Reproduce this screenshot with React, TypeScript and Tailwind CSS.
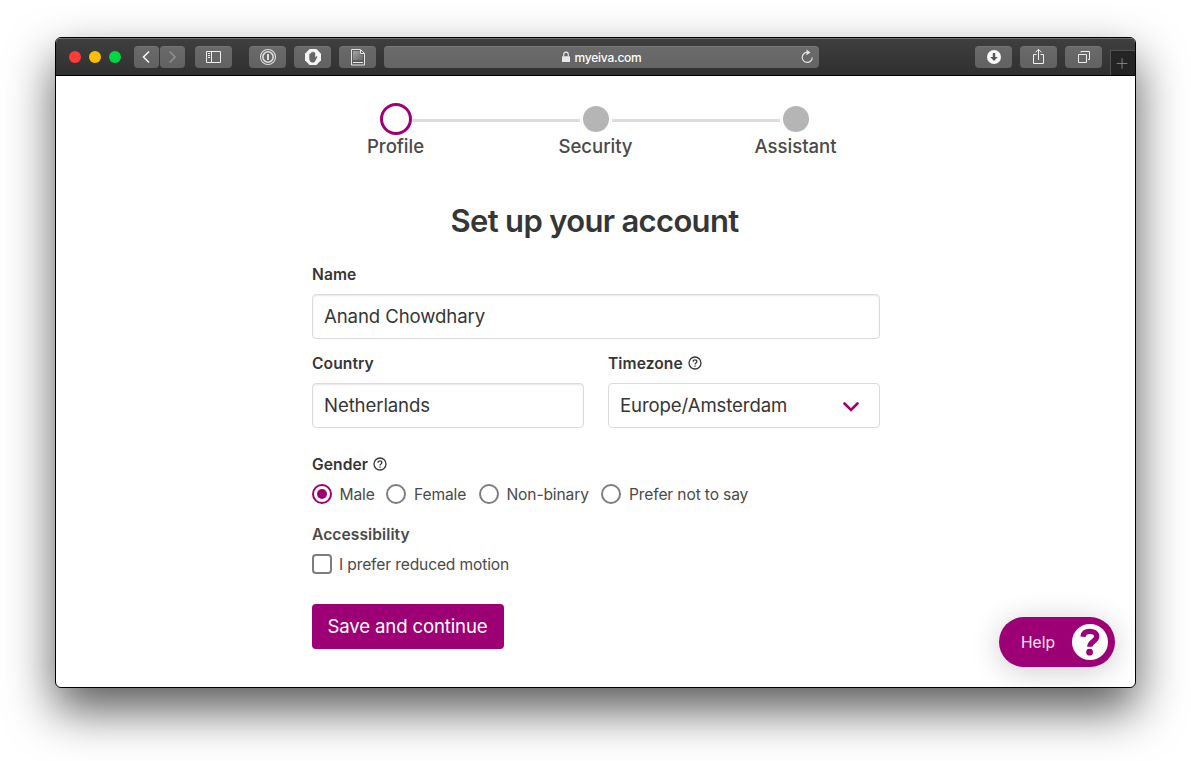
import type { ReactNode } from "react";

function ToolButton({ className = "", children }: { className?: string; children: ReactNode }) {
  return (
    <button
      className={`flex h-[22px] shrink-0 items-center justify-center rounded-[4px] border-t border-[#747474] bg-gradient-to-b from-[#6a6a6a] to-[#616161] ${className}`}
    >
      {children}
    </button>
  );
}

function Toolbar() {
  return (
    <div className="flex h-[38px] shrink-0 border-t border-b border-t-[#6c6c6c] border-b-black bg-gradient-to-b from-[#3f3f3f] to-[#303030] pl-[13px]">
      <div className="flex h-9 items-center gap-2">
        <span className="size-3 rounded-full bg-[#ff3b37]" />
        <span className="size-3 rounded-full bg-[#ffbf00]" />
        <span className="size-3 rounded-full bg-[#00d544]" />
      </div>
      <div className="ml-[13px] flex gap-px pt-[7px]">
        <ToolButton className="w-[25px]">
          <svg width="25" height="21" viewBox="0 0 25 21" fill="none" stroke="#f2f2f2" strokeWidth="1.6">
            <path d="M15 4.500 9.500 10 15 15.500" />
          </svg>
        </ToolButton>
        <ToolButton className="w-[25px]">
          <svg width="25" height="21" viewBox="0 0 25 21" fill="none" stroke="#929292" strokeWidth="1.4">
            <path d="M9.600 4.500 15.100 10 9.600 15.500" />
          </svg>
        </ToolButton>
      </div>
      <div className="ml-[10px] pt-[7px]">
        <ToolButton className="w-[37px]">
          <svg width="37" height="21" viewBox="0 0 37 21" fill="none" stroke="#ededed">
            <path d="M11.500 4.500h14v11h-14zM16.500 4.500v11M13 6.500h2M13 8.500h2M13 10.500h2" />
          </svg>
        </ToolButton>
      </div>
      <div className="ml-[17px] flex gap-2 pt-[7px]">
        <ToolButton className="w-[37px]">
          <svg width="37" height="21" viewBox="0 0 37 21" fill="none" stroke="#dedede">
            <circle cx="19" cy="10" r="7.500" strokeWidth="1.100" />
            <circle cx="19" cy="10" r="5.200" strokeWidth="1.600" />
            <path d="M19 7v6" strokeWidth="2" />
          </svg>
        </ToolButton>
        <ToolButton className="w-[37px]">
          <svg width="37" height="21" viewBox="0 0 37 21">
            <path d="M15.600 2h6.800L27 6.700v6.600L22.400 18h-6.800L11 13.300V6.700z" fill="#f4f4f4" />
            <path
              d="M15.300 10.800V7.200c0-.9 1.300-.9 1.400 0V6c0-1 1.400-1 1.500 0v-.7c0-1 1.500-1 1.500 0V6c.1-.9 1.500-.8 1.500.1v4.400l.8-1c.7-.7 1.600 0 1.200.7l-2 3.900c-.5 1-1.300 1.500-2.500 1.500-2.300 0-3.400-1.400-3.400-4.800z"
              fill="#656565"
            />
          </svg>
        </ToolButton>
        <ToolButton className="w-[37px]">
          <svg width="37" height="21" viewBox="0 0 37 21" fill="none" stroke="#e6e6e6">
            <defs>
              <linearGradient id="page" x1="0" y1="0" x2="1" y2="1">
                <stop offset="0" stopColor="#a6a6a6" />
                <stop offset="1" stopColor="#666" />
              </linearGradient>
            </defs>
            <path d="M12.500 2.500h9l4 4v11.500h-13z" fill="#5c5c5c" />
            <path d="M14 4h7v3.500h3V13H14z" fill="url(#page)" stroke="none" />
            <path d="M21.500 3v3.500h4" />
            <path d="M14 15.500h10" strokeWidth="1.200" />
          </svg>
        </ToolButton>
      </div>
      <div className="ml-2 pt-[7px]">
        <div className="flex h-[22px] w-[435px] items-center rounded-[4px] border-t border-[#7a7a7a] bg-gradient-to-b from-[#6b6b6b] to-[#646464] pr-[5px] pl-[177px]">
          <svg width="10" height="12" viewBox="0 0 10 12" className="mb-px shrink-0">
            <path d="M2.700 5.500V3.400a2.300 2.300 0 0 1 4.600 0v2.100" fill="none" stroke="#e8e8e8" strokeWidth="1.100" />
            <rect x="1" y="5.200" width="8" height="5.800" rx="0.600" fill="#e8e8e8" />
          </svg>
          <span className="ml-[3.500px] text-[12px] leading-5 font-medium tracking-[-0.23px] text-white">
            myeiva.com
          </span>
          <svg width="14" height="16" viewBox="0 0 14 16" className="mb-px ml-auto" fill="none" stroke="#e2e2e2" strokeWidth="1.200">
            <path d="M7.500 3.400A5 5 0 1 0 12.200 8.400" />
            <path d="M6.500.6 10.500 3.400 6.500 6.200z" fill="#e2e2e2" stroke="none" />
          </svg>
        </div>
      </div>
      <div className="ml-auto flex gap-2 pt-[7px]">
        <ToolButton className="w-[37px]">
          <svg width="37" height="21" viewBox="0 0 37 21">
            <circle cx="19" cy="10" r="7" fill="#f8f8f8" />
            <path d="M17.800 6h2.400v4h2.600L19 14l-3.800-4h2.600z" fill="#565656" />
          </svg>
        </ToolButton>
        <ToolButton className="w-[37px]">
          <svg width="37" height="21" viewBox="0 0 37 21" fill="none" stroke="#efefef">
            <path d="M16.500 7.500h-3v9h10v-9h-3M18.500 13V2.500M15.500 5.300l3-3 3 3" />
          </svg>
        </ToolButton>
        <ToolButton className="w-[37px]">
          <svg width="37" height="21" viewBox="0 0 37 21" fill="none" stroke="#ededed">
            <path d="M13.500 7.500h8v8h-8zM16 5.500v-1h8.500v8h-1.500" />
          </svg>
        </ToolButton>
      </div>
      <div className="mt-[11px] ml-2 flex w-[25px] items-center justify-center border-t border-l border-[#525252] bg-[#242424]">
        <svg width="25" height="24" viewBox="0 0 25 24" stroke="#868686">
          <path d="M6 12.500h11M11.500 7v11" />
        </svg>
      </div>
    </div>
  );
}

function Stepper() {
  return (
    <div className="mx-auto w-[600px]">
      <div className="flex h-8 items-center justify-center">
        <span className="size-8 rounded-full border-[3px] border-[#9d0075]" />
        <span className="mt-[3px] h-[3px] w-[168px] bg-[#dadbda]" />
        <span className="mx-[3px] size-[26px] rounded-full bg-[#b5b5b5]" />
        <span className="mt-[3px] h-[3px] w-[168px] bg-[#dadbda]" />
        <span className="mx-[3px] size-[26px] rounded-full bg-[#b5b5b5]" />
      </div>
      <div className="grid h-[22px] grid-cols-3 text-center text-[18.6px] leading-[22px] font-[550] tracking-[-0.05px] text-[#4a4a4a]">
        <span>Profile</span>
        <span>Security</span>
        <span>Assistant</span>
      </div>
    </div>
  );
}

function HelpMark() {
  return (
    <svg width="14" height="14" viewBox="0 0 14 14" fill="none" stroke="#363636" strokeWidth="1.300">
      <circle cx="7" cy="7" r="6" />
      <path d="M5.100 5.700c0-2.500 3.800-2.400 3.800-.1 0 1.400-1.900 1.500-1.900 2.900" />
      <path d="M7 9.400v1.300" />
    </svg>
  );
}

function Label({ className = "", help = false, children }: { className?: string; help?: boolean; children: ReactNode }) {
  return (
    <div className={`flex h-5 items-center gap-[5px] text-[15.6px] leading-5 font-semibold tracking-[0.08px] ${className}`}>
      <span className="pt-0.5">{children}</span>
      {help && <HelpMark />}
    </div>
  );
}

function Field({ className = "", children }: { className?: string; children: ReactNode }) {
  return (
    <div
      className={`mt-[10px] flex h-[45px] items-center rounded-[4px] border border-[#dbdbdb] pl-[11px] text-[18.6px] tracking-[-0.11px] text-[#363636] ${className}`}
    >
      {children}
    </div>
  );
}

function Radio({ className, checked = false, children }: { className: string; checked?: boolean; children: ReactNode }) {
  return (
    <label className={`flex shrink-0 items-center ${className}`}>
      <span
        className={`flex size-5 shrink-0 items-center justify-center rounded-full border-2 ${checked ? "border-[#9d0075]" : "border-[#7e7e7e]"}`}
      >
        {checked && <span className="size-[10px] rounded-full bg-[#9d0075]" />}
      </span>
      <span className="pt-0.5 whitespace-nowrap">{children}</span>
    </label>
  );
}

export default function App() {
  return (
    <div className="h-[761px] w-[1191px] overflow-hidden bg-white pt-[37px] pl-[55px] font-['Inter','Liberation_Sans',sans-serif]">
      <div className="relative flex h-[651px] w-[1081px] flex-col overflow-hidden rounded-[6px] border border-black bg-white shadow-[0_22px_48px_rgba(0,0,0,0.65)]">
        <Toolbar />
        <main className="flex-1 pt-[27px] text-[#363636]">
          <Stepper />
          <form className="ml-[256px] w-[568px]">
            <h1 className="mt-[44px] h-10 pr-[3px] text-center text-[31px] leading-10 font-semibold tracking-[-0.67px]">
              Set up your account
            </h1>
            <Label className="mt-[23px]">Name</Label>
            <Field className="shadow-[inset_0_1px_2px_rgba(10,10,10,0.1)]">Anand Chowdhary</Field>
            <div className="mt-[14px] grid grid-cols-2 gap-6">
              <div>
                <Label>Country</Label>
                <Field className="shadow-[inset_0_1px_2px_rgba(10,10,10,0.1)]">Netherlands</Field>
              </div>
              <div>
                <Label help>Timezone</Label>
                <Field className="justify-between pr-5">
                  <span>Europe/Amsterdam</span>
                  <svg width="16" height="10" viewBox="0 0 16 10" className="mt-0.5" fill="none" stroke="#9d0075" strokeWidth="2.600">
                    <path d="M1.500 1.500 8 8l6.500-6.500" strokeLinecap="round" />
                  </svg>
                </Field>
              </div>
            </div>
            <Label className="mt-[26px]" help>
              Gender
            </Label>
            <div className="mt-[10px] flex h-5 text-[15.6px] leading-5 tracking-[-0.14px] text-[#4a4a4a]">
              <Radio className="w-[74px] gap-[7.5px]" checked>
                Male
              </Radio>
              <Radio className="w-[93px] gap-2">Female</Radio>
              <Radio className="w-[122px] gap-[7.5px]">Non-binary</Radio>
              <Radio className="w-[160px] gap-2">Prefer not to say</Radio>
            </div>
            <Label className="mt-5 text-[#4a4a4a]">Accessibility</Label>
            <label className="mt-[10px] flex h-5 items-center gap-[7px] text-[15.6px] leading-5 tracking-[-0.14px] text-[#4a4a4a]">
              <span className="size-5 rounded-[4px] border-2 border-[#7e7e7e]" />
              <span className="pt-0.5">I prefer reduced motion</span>
            </label>
            <button
              type="button"
              className="mt-[30px] flex h-[45px] w-[192px] items-center justify-center rounded-[4px] bg-[#9d0075] pr-px text-[18.6px] tracking-[-0.15px] text-white"
            >
              Save and continue
            </button>
          </form>
        </main>
        <button className="absolute right-5 bottom-5 flex h-[50px] w-[116px] items-center justify-between rounded-full bg-[#9d0075] pr-[7px] pl-[22px] text-[15.6px] text-[#f6e3f1] shadow-[0_4px_30px_rgba(0,0,0,0.2)]">
          <span className="pt-0.5">Help</span>
          <svg width="36" height="36" viewBox="0 0 36 36">
            <circle cx="18" cy="18" r="18" fill="#fff" />
            <path
              d="M11 12.800c.3-3.800 3-5.400 6.700-5.400 4.100 0 7 1.800 7 5 0 4.700-6.900 5.200-6.900 10.400"
              fill="none"
              stroke="#9d0075"
              strokeWidth="5.400"
            />
            <circle cx="17.600" cy="28.200" r="3.400" fill="#9d0075" />
          </svg>
        </button>
      </div>
    </div>
  );
}
